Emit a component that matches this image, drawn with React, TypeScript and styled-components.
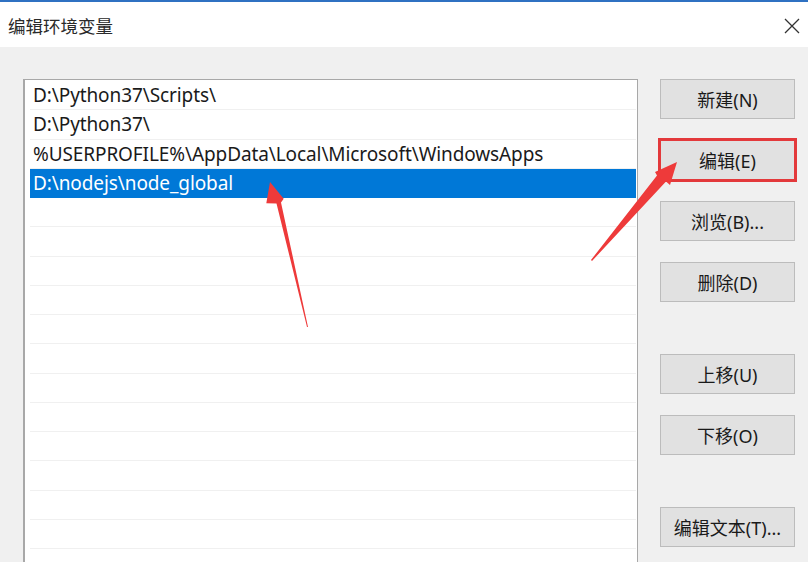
import React from 'react'
import styled, { createGlobalStyle } from 'styled-components'

const GlobalStyle = createGlobalStyle`
    html, body {
        margin: 0;
        padding: 0;
        background: #f0f0f0;
    }
`

const paths = [
    'D:\\Python37\\Scripts\\',
    'D:\\Python37\\',
    '%USERPROFILE%\\AppData\\Local\\Microsoft\\WindowsApps',
    'D:\\nodejs\\node_global',
]

const SELECTED = 3
const TOTAL_ROWS = 18

type Action = { label: string; highlight?: boolean; spaced?: boolean }

const actions: Action[] = [
    { label: '新建(N)' },
    { label: '编辑(E)', highlight: true },
    { label: '浏览(B)...' },
    { label: '删除(D)' },
    { label: '上移(U)', spaced: true },
    { label: '下移(O)' },
    { label: '编辑文本(T)...', spaced: true },
]

const CloseIcon = () => (
    <svg width="16" height="16" viewBox="0 0 16 16">
        <path d="M1 1 L15 15 M15 1 L1 15" stroke="#333" strokeWidth="1.3" fill="none" />
    </svg>
)

// callout arrows drawn over the screenshot
const Arrows = () => (
    <Overlay width="808" height="562" viewBox="0 0 808 562">
        <polygon
            points="307,327 276.5,203.5 266.3,203.2 270,182 283.7,198.8 281,202.5 308,327"
            fill="#ee3a3a"
        />
        <polygon
            points="591,260 657,175.5 655,172 677,162 670,185 666,181.5 592,261"
            fill="#ee3a3a"
        />
    </Overlay>
)

export default function App() {
    return (
        <Window>
            <GlobalStyle />
            <TitleBar>
                <Title>编辑环境变量</Title>
                <CloseButton>
                    <CloseIcon />
                </CloseButton>
            </TitleBar>
            <Body>
                <ListBox>
                    {Array.from({ length: TOTAL_ROWS }).map((_, i) => (
                        <Row key={i} $selected={i === SELECTED}>
                            {paths[i] ?? ''}
                        </Row>
                    ))}
                </ListBox>
                <ButtonColumn>
                    {actions.map((a) => (
                        <ActionButton
                            key={a.label}
                            $highlight={a.highlight}
                            $spaced={a.spaced}
                        >
                            {a.label}
                        </ActionButton>
                    ))}
                </ButtonColumn>
            </Body>
            <Arrows />
        </Window>
    )
}

const Window = styled.div`
    position: relative;
    width: 808px;
    height: 562px;
    overflow: hidden;
    background: #f0f0f0;
    font-family: 'Noto Sans', 'Noto Sans CJK SC', sans-serif;
    color: #111;
`

const TitleBar = styled.div`
    height: 45px;
    border-top: 2px solid #2f71c2;
    background: #ffffff;
    display: flex;
    align-items: center;
    justify-content: space-between;
    padding: 0 8px 0 8px;
`

const Title = styled.div`
    font-family: 'Noto Sans CJK SC', sans-serif;
    font-size: 17.5px;
    color: #2a2a2a;
    margin-top: 2px;
`

const CloseButton = styled.div`
    display: flex;
    align-items: center;
    justify-content: center;
    width: 20px;
    height: 20px;
    margin-right: -2px;
    margin-top: 2px;
`

const Body = styled.div`
    display: flex;
    flex-direction: row;
    align-items: flex-start;
    padding: 32px 0 0 23px;
`

const ListBox = styled.div`
    width: 606px;
    height: 520px;
    background: #ffffff;
    border: 1px solid #a8a8a8;
    border-left-width: 2px;
    padding: 1px 1px 0 5px;
    display: flex;
    flex-direction: column;
`

const Row = styled.div<{ $selected?: boolean }>`
    box-sizing: border-box;
    height: 29.25px;
    flex-shrink: 0;
    display: flex;
    align-items: center;
    padding-left: 3px;
    font-size: 19px;
    letter-spacing: -0.1px;
    white-space: nowrap;
    border-bottom: 1px solid ${(p) => (p.$selected ? '#0078d7' : '#f0f0f0')};
    background: ${(p) => (p.$selected ? '#0078d7' : '#ffffff')};
    color: ${(p) => (p.$selected ? '#ffffff' : '#1a1a1a')};
`

const ButtonColumn = styled.div`
    display: flex;
    flex-direction: column;
    row-gap: 21px;
    margin-left: 22px;
    width: 135px;
`

const ActionButton = styled.div<{ $highlight?: boolean; $spaced?: boolean }>`
    box-sizing: border-box;
    height: 40px;
    display: flex;
    align-items: center;
    justify-content: center;
    background: #e1e1e1;
    border: 1px solid #bcbcbc;
    font-size: 18px;
    color: #1a1a1a;
    margin-top: ${(p) => (p.$spaced ? '31px' : '0')};
    outline: ${(p) => (p.$highlight ? '3px solid #e3393b' : 'none')};
    outline-offset: -1px;
`

const Overlay = styled.svg`
    position: absolute;
    left: 0;
    top: 0;
    pointer-events: none;
`
